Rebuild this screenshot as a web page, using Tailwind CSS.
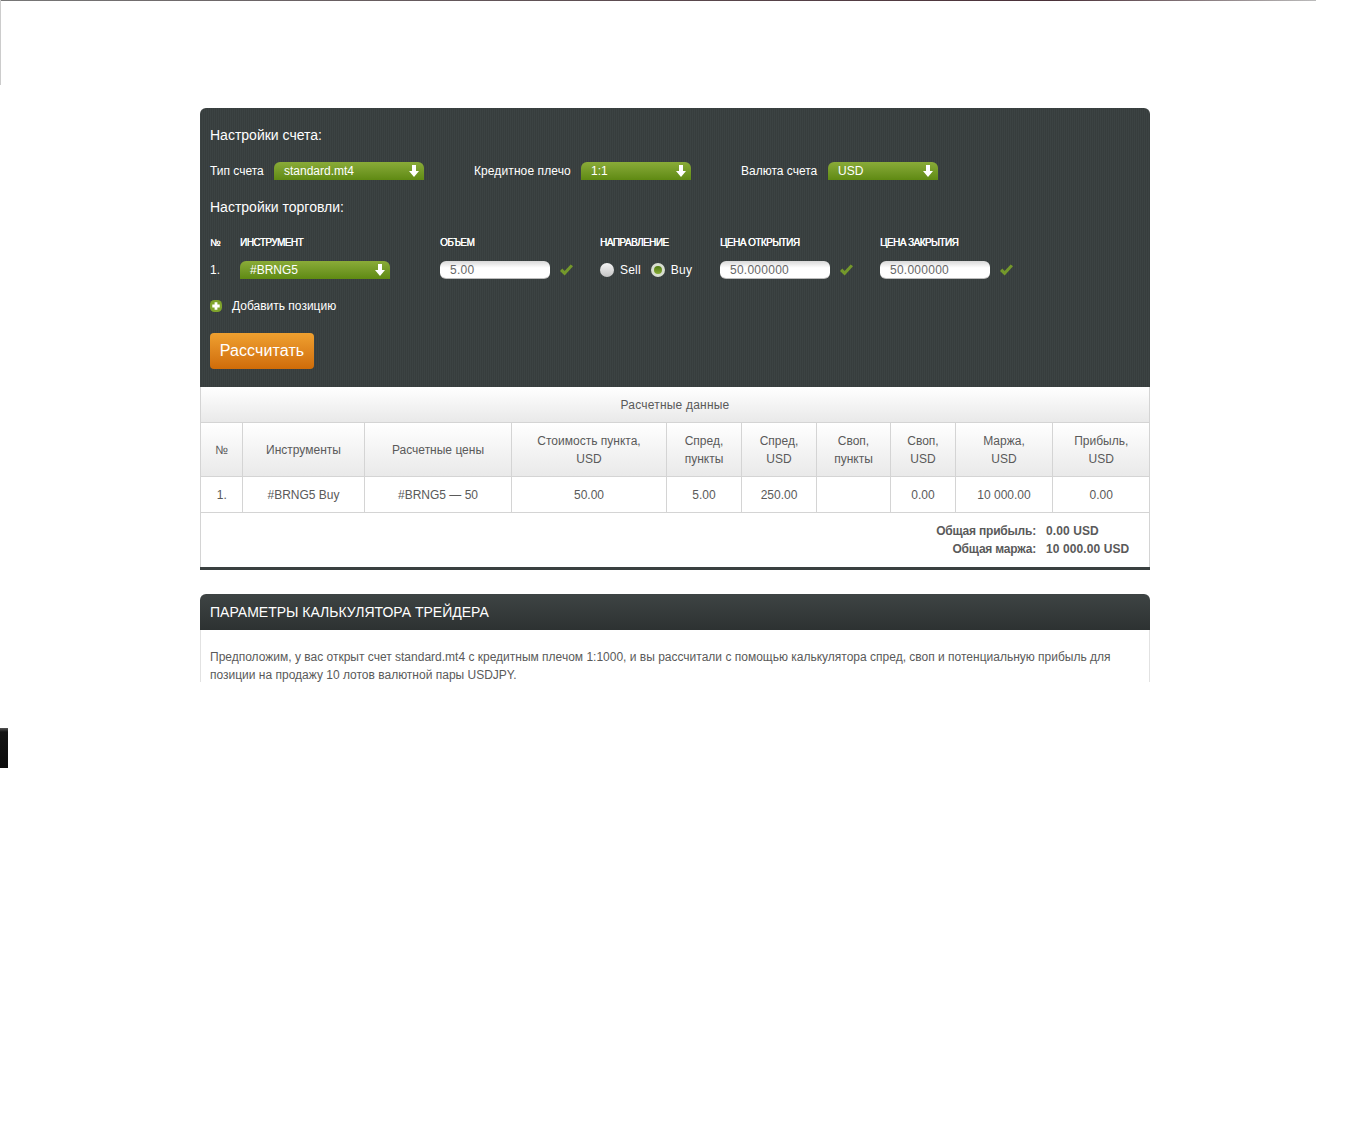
<!DOCTYPE html>
<html lang="ru">
<head>
    <meta charset="UTF-8">
    <title>Калькулятор трейдера</title>
    <script src="https://cdn.jsdelivr.net/npm/@tailwindcss/browser@4"></script>
</head>
<body class="relative bg-white h-[1128px] overflow-hidden font-['Liberation_Sans',Arial,sans-serif] text-[12px] text-[#5a5a5a]">

    <!-- scraps at the page edges -->
    <div class="absolute top-0 left-0 w-[1316px] h-px bg-gradient-to-r from-[#777] via-[#4a3038] via-80% to-[#bbb]"></div>
    <div class="absolute top-0 left-0 w-px h-[85px] bg-[#ccc]"></div>
    <div class="absolute top-[728px] left-0 w-2 h-10 bg-gradient-to-b from-[#555] from-0% via-[#141414] via-10% to-[#0c0c0c]"></div>

    <main class="w-[950px] ml-[200px] pt-[108px]">

        <!-- Settings panel -->
        <section class="h-[279px] px-2.5 rounded-t-md text-white bg-[#3a4040] bg-[repeating-linear-gradient(90deg,#3c4343_0,#3c4343_1px,#373d3d_1px,#373d3d_2px)]">
            <h2 class="pt-[19px] h-[54px] text-[14px] leading-4 font-normal">Настройки счета:</h2>

            <div class="flex items-center h-[18px]">
                <label class="w-[64px]">Тип счета</label>
                <div class="w-[150px] h-[18px] pl-2.5 pr-[5px] flex items-center justify-between rounded-t-md bg-gradient-to-b from-[#8aab38] to-[#5f8a12]">
                    <span>standard.mt4</span>
                    <svg width="10" height="12" viewBox="0 0 10 12"><path d="M3 0h4v6h3l-5 6-5-6h3z" fill="#fff"/></svg>
                </div>
                <label class="w-[107px] ml-[50px] tracking-[0.1px]">Кредитное плечо</label>
                <div class="w-[110px] h-[18px] pl-2.5 pr-[5px] flex items-center justify-between rounded-t-md bg-gradient-to-b from-[#8aab38] to-[#5f8a12]">
                    <span>1:1</span>
                    <svg width="10" height="12" viewBox="0 0 10 12"><path d="M3 0h4v6h3l-5 6-5-6h3z" fill="#fff"/></svg>
                </div>
                <label class="w-[87px] ml-[50px]">Валюта счета</label>
                <div class="w-[110px] h-[18px] pl-2.5 pr-[5px] flex items-center justify-between rounded-t-md bg-gradient-to-b from-[#8aab38] to-[#5f8a12]">
                    <span>USD</span>
                    <svg width="10" height="12" viewBox="0 0 10 12"><path d="M3 0h4v6h3l-5 6-5-6h3z" fill="#fff"/></svg>
                </div>
            </div>

            <h2 class="pt-[19px] h-[57px] text-[14px] leading-4 font-normal">Настройки торговли:</h2>

            <!-- Position grid -->
            <div class="grid grid-cols-[30px_200px_160px_120px_160px_160px] text-[10px] leading-3 tracking-[-0.55px] [text-shadow:0.3px_0_0_#fff] uppercase">
                <span>№</span>
                <span>Инструмент</span>
                <span>Объем</span>
                <span>Направление</span>
                <span>Цена открытия</span>
                <span>Цена закрытия</span>
            </div>
            <div class="mt-3 h-[18px] grid grid-cols-[30px_200px_160px_120px_160px_160px] items-center">
                <span>1.</span>
                <div class="w-[150px] h-[18px] pl-2.5 pr-[5px] flex items-center justify-between rounded-t-md bg-gradient-to-b from-[#8aab38] to-[#5f8a12]">
                    <span>#BRNG5</span>
                    <svg width="10" height="12" viewBox="0 0 10 12"><path d="M3 0h4v6h3l-5 6-5-6h3z" fill="#fff"/></svg>
                </div>
                <div class="flex items-center">
                    <div class="w-[110px] h-[18px] pl-2.5 leading-[18px] tracking-[0.25px] rounded-md border-b border-[#bbb] text-[#666] bg-gradient-to-b from-[#d8d8d8] via-white via-40% to-white">5.00</div>
                    <svg class="ml-2.5" width="13" height="12" viewBox="0 0 14 12"><path d="M0 7l2.5-2.5L5 7l6.5-7L14 2 5 12z" fill="#74982b"/></svg>
                </div>
                <div class="flex items-center">
                    <span class="w-3.5 h-3.5 rounded-full bg-gradient-to-b from-[#f4f4f4] to-[#c4c4c4]"></span>
                    <span class="ml-1.5 tracking-[0.2px]">Sell</span>
                    <span class="ml-2.5 w-3.5 h-3.5 rounded-full border-[3px] border-[#d8ddd0] bg-gradient-to-b from-[#4f7a10] to-[#8aae38]"></span>
                    <span class="ml-1.5 tracking-[0.2px]">Buy</span>
                </div>
                <div class="flex items-center">
                    <div class="w-[110px] h-[18px] pl-2.5 leading-[18px] tracking-[0.25px] rounded-md border-b border-[#bbb] text-[#666] bg-gradient-to-b from-[#d8d8d8] via-white via-40% to-white">50.000000</div>
                    <svg class="ml-2.5" width="13" height="12" viewBox="0 0 14 12"><path d="M0 7l2.5-2.5L5 7l6.5-7L14 2 5 12z" fill="#74982b"/></svg>
                </div>
                <div class="flex items-center">
                    <div class="w-[110px] h-[18px] pl-2.5 leading-[18px] tracking-[0.25px] rounded-md border-b border-[#bbb] text-[#666] bg-gradient-to-b from-[#d8d8d8] via-white via-40% to-white">50.000000</div>
                    <svg class="ml-2.5" width="13" height="12" viewBox="0 0 14 12"><path d="M0 7l2.5-2.5L5 7l6.5-7L14 2 5 12z" fill="#74982b"/></svg>
                </div>
            </div>

            <div class="mt-5 h-3.5 flex items-center">
                <svg width="12" height="12" viewBox="0 0 12 12"><rect width="12" height="12" rx="4.5" fill="#7fa32c"/><path d="M4.6 2.3h2.8v2.3h2.3v2.8H7.4v2.3H4.6V7.4H2.3V4.6h2.3z" fill="#fff"/></svg>
                <span class="ml-2.5">Добавить позицию</span>
            </div>

            <button class="mt-5 w-[104px] h-9 rounded-[4px] text-[16px] tracking-[0.1px] text-white bg-gradient-to-b from-[#efa02f] to-[#cf6c08]">Рассчитать</button>
        </section>

        <!-- Results -->
        <section class="border-x border-[#d4d4d4]">
            <div class="h-[35px] pt-px leading-[35px] tracking-[0.2px] text-center bg-gradient-to-b from-white to-[#e9e9e9]">Расчетные данные</div>
            <table class="w-[948px] table-fixed border-collapse text-center leading-[18px] [&_th]:pl-px [&_td]:pl-px">
                <colgroup>
                    <col class="w-[41px]"><col class="w-[122px]"><col class="w-[147px]"><col class="w-[155px]"><col class="w-[75px]"><col class="w-[75px]"><col class="w-[74px]"><col class="w-[65px]"><col class="w-[97px]"><col class="w-[97px]">
                </colgroup>
                <thead class="bg-gradient-to-b from-white to-[#e9e9e9]">
                    <tr class="h-[54px] border-y border-[#d4d4d4] divide-x divide-[#d4d4d4]">
                        <th class="font-normal">№</th>
                        <th class="font-normal">Инструменты</th>
                        <th class="font-normal">Расчетные цены</th>
                        <th class="font-normal">Стоимость пункта,<br>USD</th>
                        <th class="font-normal">Спред,<br>пункты</th>
                        <th class="font-normal">Спред,<br>USD</th>
                        <th class="font-normal">Своп,<br>пункты</th>
                        <th class="font-normal">Своп,<br>USD</th>
                        <th class="font-normal">Маржа,<br>USD</th>
                        <th class="font-normal">Прибыль,<br>USD</th>
                    </tr>
                </thead>
                <tbody>
                    <tr class="h-9 border-b border-[#d4d4d4] divide-x divide-[#d4d4d4]">
                        <td>1.</td>
                        <td>#BRNG5 Buy</td>
                        <td>#BRNG5 — 50</td>
                        <td>50.00</td>
                        <td>5.00</td>
                        <td>250.00</td>
                        <td></td>
                        <td>0.00</td>
                        <td>10 000.00</td>
                        <td>0.00</td>
                    </tr>
                </tbody>
            </table>
            <div class="h-[54px] pt-[9px] pr-[19px] grid grid-cols-[1fr_84px] content-start gap-x-2.5 leading-[18px] font-bold text-right">
                <span class="tracking-[-0.2px]">Общая прибыль:</span><span class="text-left tracking-[0.1px]">0.00 USD</span>
                <span class="tracking-[-0.2px]">Общая маржа:</span><span class="text-left tracking-[0.1px] whitespace-nowrap">10 000.00 USD</span>
            </div>
        </section>
        <div class="h-[3px] bg-[#3a4040]"></div>

        <!-- Description -->
        <section class="mt-6">
            <h2 class="h-9 px-2.5 leading-9 rounded-t-md text-[14px] font-normal text-white uppercase bg-gradient-to-b from-[#3e4444] to-[#2d3232]">Параметры калькулятора трейдера</h2>
            <div class="h-[52px] overflow-hidden pl-[9px] pr-2.5 pt-[18px] leading-[18px] border-x border-[#e2e2e2]">
                Предположим, у вас открыт счет standard.mt4 с кредитным плечом 1:1000, и вы рассчитали с помощью калькулятора спред, своп и потенциальную прибыль для позиции на продажу 10 лотов валютной пары USDJPY.
            </div>
        </section>
    </main>
</body>
</html>
